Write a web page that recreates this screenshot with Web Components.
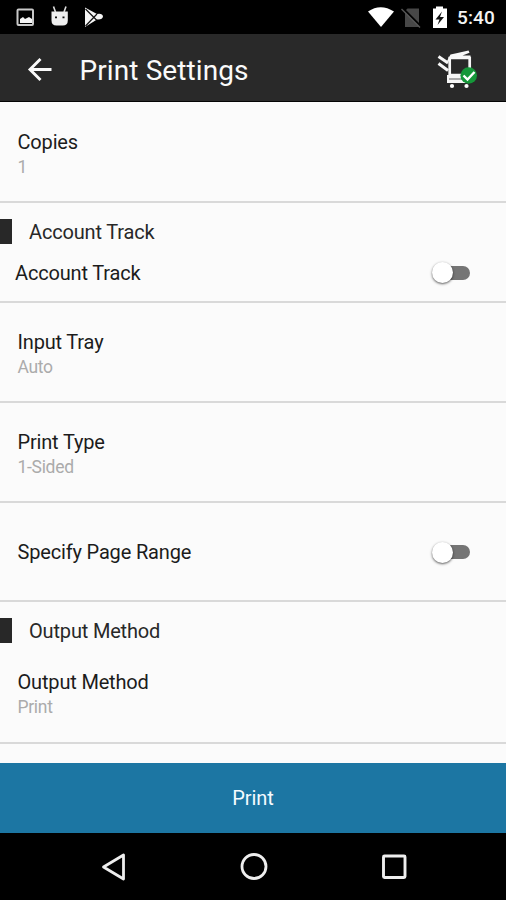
<!DOCTYPE html>
<html lang="en">
<head>
<meta charset="utf-8">
<title>Print Settings</title>
<style>
html,body{margin:0;height:900px;overflow:hidden;background:#fbfbfb;font-family:Roboto,"Liberation Sans",sans-serif}
</style>
</head>
<body>
<print-app></print-app>
<script>
function element(name, html) {
  customElements.define(name, class extends HTMLElement {
    constructor() {
      super();
      this.attachShadow({mode: 'open'}).innerHTML = html;
    }
  });
}

element('status-bar', `
<style>
:host{display:flex;box-sizing:border-box;height:34px;flex:none;background:#000;color:#f4f4f4;padding:0 11px 0 16px}
.left,.right{display:flex;align-items:center}
.right{margin-left:auto}
svg{display:block}
.time{font-size:19px;font-weight:500;line-height:34px;margin-left:9px;padding-top:2px;width:38px;white-space:nowrap;letter-spacing:.1px}
</style>
<div class="left">
<svg width="90" height="34" viewBox="16 0 90 34">
<rect x="17.500" y="9.500" width="15.500" height="15.500" rx="1" fill="none" stroke="#c8c8c8" stroke-width="2"/>
<path d="M20 23v-4l3-2 2 2 4-2 3 2v4z" fill="#f5f5f5"/>
<path d="M51.500 11.500h16.300v9q0 5-5 5h-6.300q-5 0-5-5z" fill="#eee"/>
<path d="M53.500 6.500l2 5.500M66 6.500l-2 5.500" stroke="#ddd" stroke-width="1.600"/>
<path d="M55 17.300h2M62.500 17.300h2" stroke="#111" stroke-width="1.800"/>
<path d="M85 7.500l12 6.500q5.500-1 6 2.500q-.5 3.500-6 3l-12 7.500z" fill="#f5f5f5"/>
<path d="M85.500 9l11.500 11.500M85.500 26l11.500-12" stroke="#111" stroke-width="1.200"/>
</svg>
</div>
<div class="right">
<svg width="81" height="34" viewBox="367 0 81 34">
<path d="M368 11.500q12.500-8.500 26 0l-13 15.500z" fill="#fff"/>
<path d="M407.500 8.500H419V27h-14V11z" fill="#474747"/>
<path d="M402.500 8l19 19" stroke="#000" stroke-width="2.200"/>
<path d="M401.500 9l18.500 18.500" stroke="#555" stroke-width="1.500"/>
<path d="M433 8.500h3v-2h7v2h4V28h-14z" fill="#fff"/>
<path d="M442 11.500l-6.500 8h4l-2 5.500 6.500-8h-4z" fill="#111"/>
</svg>
<div class="time">5:40</div>
</div>`);

element('app-bar', `
<style>
:host{display:flex;align-items:center;box-sizing:border-box;height:68px;flex:none;background:#292929;border-bottom:1px solid #050505;color:#fafafa;padding:4px 28px 0 27px}
h1{font-size:28px;font-weight:400;line-height:36px;margin:0 auto 0 26.500px;padding-top:2px;letter-spacing:.1px}
svg{display:block;flex:none}
</style>
<svg width="26" height="26" viewBox="27 56.500 26 26"><path d="M51.500 69H30M40.500 58.500L30 69l10.500 10.500" fill="none" stroke="#fafafa" stroke-width="2.900"/></svg>
<h1><slot></slot></h1>
<svg width="42" height="42" viewBox="436 48 42 42">
<path d="M438.500 55.500l9.500 6.500M438.500 62.500l9.500 7" stroke="#f7f7f7" stroke-width="3"/>
<path d="M447 60l3.500-6.500 7-1.500 11-2.500 1 2.200-7 2.800h8v3H450l-1 3z" fill="#f7f7f7"/>
<path d="M449.700 57h20v17h-20z" fill="none" stroke="#f7f7f7" stroke-width="2.700"/>
<path d="M447 74h23v8h-23z" fill="#f7f7f7"/>
<path d="M449 78h15" stroke="#777" stroke-width="1.200"/>
<circle cx="452" cy="85" r="2.100" fill="#fff"/><circle cx="466.500" cy="85" r="2.100" fill="#fff"/>
<circle cx="468.700" cy="74.500" r="8.300" fill="#159739"/>
<path d="M463.500 74.500l4 4 7-7.500" fill="none" stroke="#fff" stroke-width="2.400"/>
</svg>`);

element('toggle-switch', `
<style>
:host{display:flex;align-items:center;width:38px;height:24px;flex:none}
.track{flex:1;height:14px;margin-left:8px;border-radius:7px;background:#757575;display:flex;align-items:center}
.thumb{flex:none;width:21px;height:21px;margin-left:-8px;border-radius:50%;background:#fff;box-shadow:0 1px 2.500px rgba(0,0,0,.65)}
</style>
<div class="track"><div class="thumb"></div></div>`);

element('setting-row', `
<style>
:host{display:flex;align-items:center;box-sizing:border-box;height:var(--h,100px);padding:var(--top,0) 36px 0 var(--left,17.500px);border-bottom:2px solid #d9d9d9;flex:none}
.text{flex:1;padding-top:var(--shift,0)}
.name{font-size:20px;line-height:24px;color:#1c1c1c;letter-spacing:-.17px}
.value{display:block;font-size:17.500px;line-height:24px;margin-top:1px;color:#ababab;letter-spacing:-.3px}
</style>
<div class="text"><div class="name"><slot></slot></div><slot class="value" name="value"></slot></div>
<slot name="control"></slot>`);

element('section-title', `
<style>
:host{display:flex;align-items:center;flex:none;height:26px;padding-top:15px;color:#282828;font-size:20px;line-height:26px;letter-spacing:-.17px}
i{width:12px;height:25px;background:#282828;margin-right:17px}
span{padding-top:2px}
</style><i></i><span><slot></slot></span>`);

element('print-button', `
<style>
:host{display:block;flex:none;height:70px;background:#1c76a3}
button{all:unset;display:block;width:100%;height:70px;text-align:center;color:#f5fbff;font-size:20px;letter-spacing:-.1px;line-height:71px}
</style><button><slot></slot></button>`);

element('nav-bar', `
<style>
:host{display:flex;box-sizing:border-box;flex:none;height:67px;background:#000;padding:19px 98px 0 100px;justify-content:space-between}
svg{display:block}
</style>
<svg width="28" height="30" viewBox="100 852 28 30"><path d="M103.500 867L123.500 855v24z" fill="none" stroke="#eee" stroke-width="2.800" stroke-linejoin="round"/></svg>
<svg width="28" height="30" viewBox="240 852 28 30"><circle cx="254" cy="866.500" r="12" fill="none" stroke="#eee" stroke-width="2.800"/></svg>
<svg width="28" height="30" viewBox="380 852 28 30"><rect x="383.500" y="856" width="21.500" height="21.500" rx="1" fill="none" stroke="#eee" stroke-width="2.900"/></svg>`);

element('print-app', `
<style>
:host{display:flex;flex-direction:column;width:506px;height:900px;background:#fbfbfb}
main{display:flex;flex-direction:column;height:661px;overflow:hidden}
.copies{--h:101px;--top:6px}
.account{--h:59px;--left:15px;--shift:2px}
.value-row{--top:5px}
.range{--h:99px;--top:1px;--shift:1px}
.output{--h:101px;--top:3px}
</style>
<status-bar></status-bar>
<app-bar>Print Settings</app-bar>
<main>
<setting-row class="copies">Copies<span slot="value">1</span></setting-row>
<section-title>Account Track</section-title>
<setting-row class="account">Account Track<toggle-switch slot="control"></toggle-switch></setting-row>
<setting-row class="value-row">Input Tray<span slot="value">Auto</span></setting-row>
<setting-row class="value-row">Print Type<span slot="value">1-Sided</span></setting-row>
<setting-row class="range">Specify Page Range<toggle-switch slot="control"></toggle-switch></setting-row>
<section-title>Output Method</section-title>
<setting-row class="output">Output Method<span slot="value">Print</span></setting-row>
</main>
<print-button>Print</print-button>
<nav-bar></nav-bar>`);
</script>
</body>
</html>
